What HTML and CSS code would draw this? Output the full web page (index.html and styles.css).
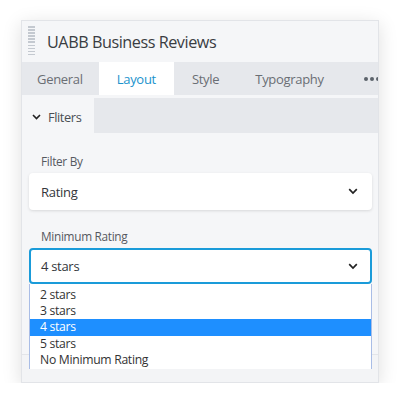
FILE: index.html
```html
<!DOCTYPE html>
<html>
<head>
<meta charset="utf-8">
<link rel="stylesheet" href="styles.css">
</head>
<body>
<div class="panel">
  <div class="header">
    <div class="handle"></div>
    <div class="title">UABB Business Reviews</div>
  </div>
  <div class="tabs">
    <div class="tab first">General</div>
    <div class="tab active">Layout</div>
    <div class="tab">Style</div>
    <div class="tab">Typography</div>
    <div class="tab more"><span class="dot"></span><span class="dot"></span><span class="dot"></span></div>
  </div>
  <div class="section-bar">
    <div class="section-tab">
      <svg class="chev-small" width="9" height="6" viewBox="0 0 9 6"><path d="M1 1 L4.5 4.5 L8 1" fill="none" stroke="#222" stroke-width="1.6"/></svg>
      <span>Fliters</span>
    </div>
  </div>
  <div class="body">
    <div class="field">
      <div class="label">Filter By</div>
      <div class="select">
        <span>Rating</span>
        <svg width="10" height="7" viewBox="0 0 10 7"><path d="M1.2 1.2 L5 5 L8.8 1.2" fill="none" stroke="#222" stroke-width="1.7"/></svg>
      </div>
    </div>
    <div class="field">
      <div class="label">Minimum Rating</div>
      <div class="select-wrap">
        <div class="select focused">
          <span>4 stars</span>
          <svg width="10" height="7" viewBox="0 0 10 7"><path d="M1.2 1.2 L5 5 L8.8 1.2" fill="none" stroke="#222" stroke-width="1.7"/></svg>
        </div>
        <ul class="options">
          <li>2 stars</li>
          <li>3 stars</li>
          <li class="selected">4 stars</li>
          <li>5 stars</li>
          <li>No Minimum Rating</li>
        </ul>
      </div>
    </div>
  </div>
  <div class="footer"></div>
</div>
</body>
</html>
```
FILE: styles.css
```css
* { box-sizing: border-box; }
html, body { margin: 0; padding: 0; background: #fff; }
body {
  font-family: "Open Sans", "Noto Sans", sans-serif;
  color: #333;
}
.panel {
  margin: 20px 0 0 21px;
  width: 358px;
  height: 363px;
  background: #f5f6f8;
  border: 1px solid #e2e4e8;
  box-shadow: 0 4px 18px rgba(0,0,0,0.13);
  overflow: hidden;
  display: flex;
  flex-direction: column;
}
.header {
  height: 41px;
  display: flex;
  align-items: center;
  padding-left: 6px;
  background: #f5f6f8;
  flex-shrink: 0;
}
.handle {
  width: 7px;
  height: 31px;
  background: repeating-linear-gradient(to bottom, #c4c9d0 0, #c4c9d0 1.5px, transparent 1.5px, transparent 3.1px);
}
.title {
  margin-left: 12px;
  font-size: 16.2px;
  color: #3a3d42;
  letter-spacing: -0.45px;
}
.tabs {
  height: 33px;
  display: flex;
  background: #e6e8ec;
  flex-shrink: 0;
  white-space: nowrap;
}
.tab {
  padding: 0 18px;
  display: flex;
  align-items: center;
  font-size: 13px;
  letter-spacing: -0.3px;
  color: #6a6e74;
  flex-shrink: 0;
}
.tab.first { padding-left: 15px; padding-right: 16px; }
.tab.active { background: #fff; color: #1b93cd; }
.tab.more { padding-left: 22px; }
.dot {
  width: 4px; height: 4px; border-radius: 50%;
  background: #5c626b;
  display: inline-block;
  margin-right: 2.3px;
}
.section-bar {
  margin-top: 3px;
  height: 35px;
  background: #e6e8ec;
  display: flex;
  flex-shrink: 0;
}
.section-tab {
  width: 72px;
  background: #f5f6f8;
  display: flex;
  align-items: center;
  padding: 3px 0 0 10px;
  font-size: 12.8px;
  letter-spacing: -0.4px;
  color: #4a4e54;
}
.chev-small { margin-right: 7px; }
.body {
  padding: 19px 6px 0 7px;
  flex: 1;
}
.field { margin-bottom: 17px; }
.label {
  font-size: 11.8px;
  letter-spacing: -0.3px;
  color: #55595f;
  padding-left: 12px;
  height: 21px;
  line-height: 18px;
}
.select {
  height: 37px;
  background: #fff;
  border-radius: 4px;
  box-shadow: 0 1px 3px rgba(0,0,0,0.12);
  display: flex;
  align-items: center;
  justify-content: space-between;
  padding: 0 14px 0 12px;
  font-size: 13px;
  letter-spacing: -0.3px;
  color: #33363b;
}
.select-wrap { position: relative; }
.select.focused {
  height: 36px;
  border: 2px solid #1a9bd9;
  box-shadow: none;
  padding-left: 10px;
  padding-right: 12px;
}
.options {
  position: absolute;
  left: 0;
  right: 0;
  top: 36px;
  margin: 0;
  padding: 2.7px 0 0 0;
  list-style: none;
  background: #fff;
  border: 1px solid #a9bde6;
  border-top: none;
  border-bottom: none;
  font-size: 12.2px;
  letter-spacing: -0.3px;
  color: #333;
  z-index: 2;
}
.options li {
  height: 16.4px;
  line-height: 16.4px;
  padding-left: 10px;
}
.options li.selected { background: #1e8fff; color: #fff; }
.footer {
  height: 28px;
  border-top: 1px solid #e3e5e9;
  background: #f3f4f6;
  flex-shrink: 0;
}
```
